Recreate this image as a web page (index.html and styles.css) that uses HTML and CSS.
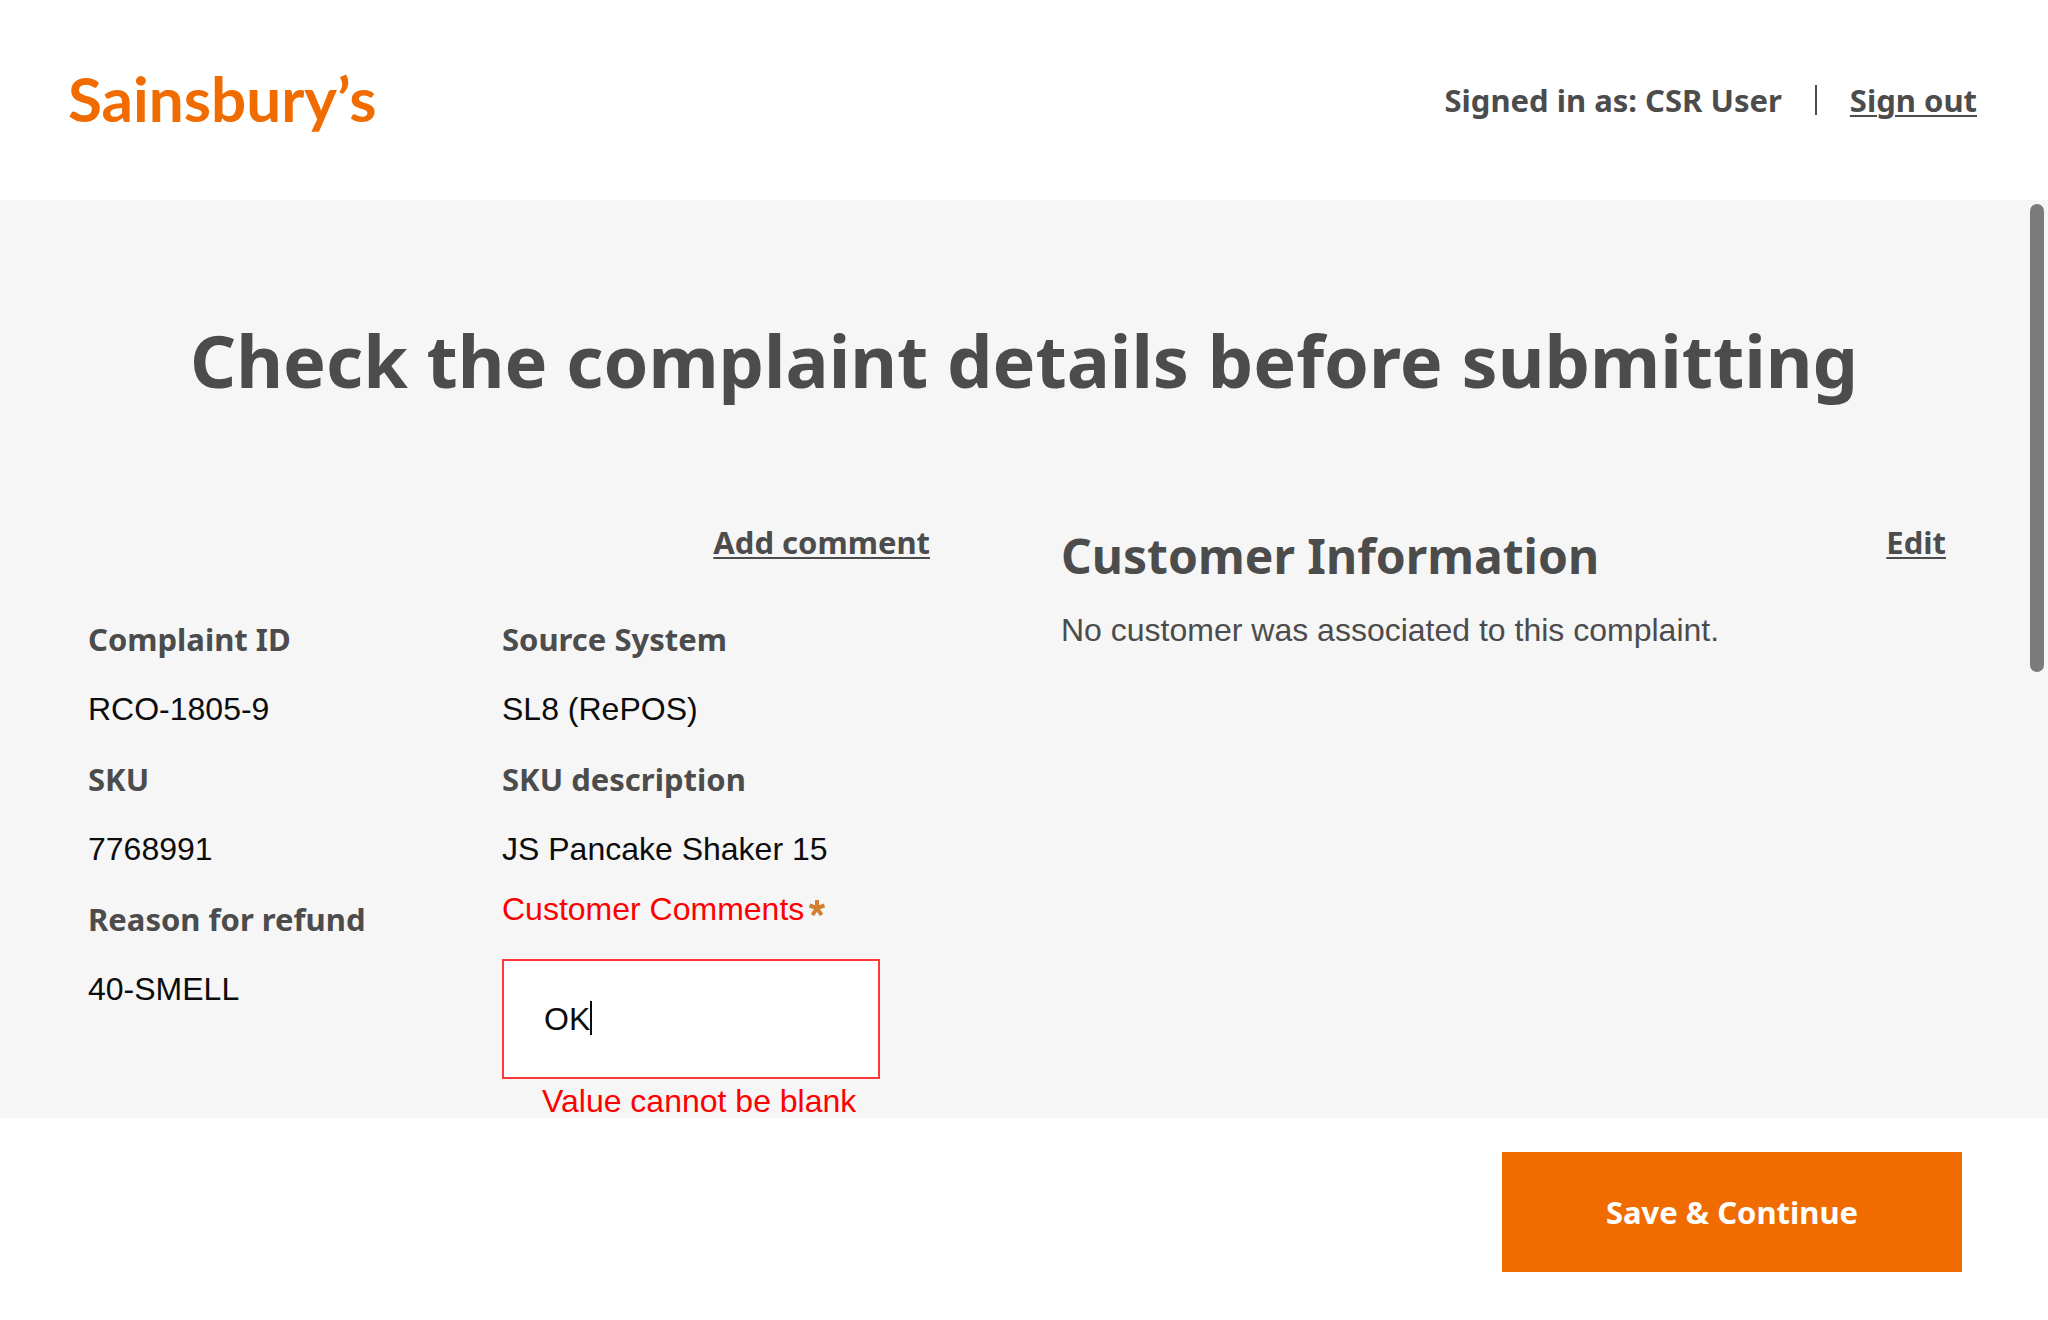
FILE: index.html
```html
<!DOCTYPE html>
<html lang="en">
<head>
<meta charset="utf-8">
<title>Check the complaint details</title>
<link rel="stylesheet" href="styles.css">
</head>
<body class="app">
  <header class="header">
    <a class="logo" href="#">Sainsbury’s</a>
    <div class="session">
      <span>Signed in as: CSR User</span>
      <span class="divider"></span>
      <a class="link" href="#">Sign out</a>
    </div>
  </header>
  <main class="main">
    <h1 class="title">Check the complaint details before submitting</h1>
    <div class="panels">
      <section class="complaint">
        <div class="actions"><a class="link" href="#">Add comment</a></div>
        <div class="columns">
          <dl class="details">
            <dt>Complaint ID</dt><dd>RCO-1805-9</dd>
            <dt>SKU</dt><dd>7768991</dd>
            <dt>Reason for refund</dt><dd>40-SMELL</dd>
          </dl>
          <div>
            <dl class="details">
              <dt>Source System</dt><dd>SL8 (RePOS)</dd>
              <dt>SKU description</dt><dd>JS Pancake Shaker 15</dd>
            </dl>
            <div class="field">
              <label class="field-label" for="comments">Customer Comments<svg class="required" viewBox="0 0 16 16" aria-hidden="true"><path d="M8 8V0M8 8L0.500 5.500M8 8L15.500 5.500M8 8L3.500 15M8 8L12.500 15"/></svg></label>
              <div class="field-box">
                <input class="field-input" id="comments" type="text" value="OK">
                <span class="caret"></span>
              </div>
              <p class="field-error">Value cannot be blank</p>
            </div>
          </div>
        </div>
      </section>
      <section class="customer">
        <div class="customer-head">
          <h2 class="subtitle">Customer Information</h2>
          <a class="link" href="#">Edit</a>
        </div>
        <p class="customer-text">No customer was associated to this complaint.</p>
      </section>
    </div>
    <div class="scroll-thumb"></div>
  </main>
  <footer class="footer">
    <button class="save" type="button">Save &amp; Continue</button>
  </footer>
</body>
</html>
```
FILE: styles.css
```css
* { box-sizing: border-box; }

.app {
  --display: "Noto Sans", "Open Sans", sans-serif;
  display: grid;
  grid-template-rows: auto 1fr auto;
  height: 100vh;
  margin: 0;
  background: #fff;
  color: #4c4c4c;
  font: 32px/40px "Liberation Sans", Arial, sans-serif;
}

.header {
  display: flex;
  align-items: center;
  justify-content: space-between;
  padding: 58px 71px 62px 68px;
}

.logo {
  color: #f06c00;
  font: 700 62px/80px Lato, sans-serif;
  text-decoration: none;
}

.session {
  display: flex;
  align-items: center;
  padding-top: 4px;
  font: 700 31px/40px var(--display);
}

.divider {
  width: 2px;
  height: 30px;
  margin: 0 33px;
  background: #4c4c4c;
}

.link {
  color: #4c4c4c;
  font: 700 31px/40px var(--display);
  text-decoration: underline;
  text-decoration-thickness: 2px;
  text-underline-offset: 3px;
}

.main {
  position: relative;
  min-height: 0;
  overflow: hidden;
  padding-top: 110px;
  background: #f6f6f6;
}

.title {
  margin: 0 0 112px;
  font: 700 72px/100px var(--display);
  text-align: center;
}

.panels {
  display: grid;
  grid-template-columns: 842fr 885fr;
  column-gap: 131px;
  padding: 0 102px 0 88px;
}

.actions {
  margin-bottom: 56px;
  text-align: right;
}

.columns {
  display: grid;
  grid-template-columns: 414fr 428fr;
  align-items: start;
}

.details {
  display: grid;
  row-gap: 30px;
  margin: 0;
}

.details dt {
  font: 700 31px/40px var(--display);
}

.details dd {
  margin: 0;
  color: #0c0c0c;
}

.field {
  padding-top: 20px;
  margin-right: 50px;
}

.field-label,
.field-error {
  color: #f00;
}

.required {
  width: 16px;
  height: 16px;
  margin-left: 5px;
  vertical-align: 4px;
  fill: none;
  stroke: #d08030;
  stroke-width: 4;
}

.field-box {
  position: relative;
  margin-top: 30px;
}

.field-input {
  display: block;
  width: 100%;
  height: 120px;
  padding: 0 40px;
  border: 2px solid #ff3838;
  border-radius: 0;
  outline: 0;
  background: #fff;
  color: #0c0c0c;
  font: inherit;
}

.caret {
  position: absolute;
  top: 42px;
  left: 88px;
  width: 2px;
  height: 34px;
  background: #0c0c0c;
}

.field-error {
  margin: 8px 0 0 40px;
  line-height: 28px;
}

.customer-head {
  display: flex;
  align-items: flex-start;
  justify-content: space-between;
}

.subtitle {
  margin: 4px 0 0;
  font: 700 48px/60px var(--display);
}

.customer-text {
  margin: 24px 0 0;
}

.scroll-thumb {
  position: absolute;
  top: 4px;
  right: 4px;
  width: 14px;
  height: 468px;
  border-radius: 7px;
  background: #7b7b7b;
}

.footer {
  display: flex;
  justify-content: flex-end;
  padding: 34px 86px 48px;
}

.save {
  width: 460px;
  height: 120px;
  border: 0;
  background: #f06c00;
  color: #fff;
  font: 700 31px/40px var(--display);
}
```
